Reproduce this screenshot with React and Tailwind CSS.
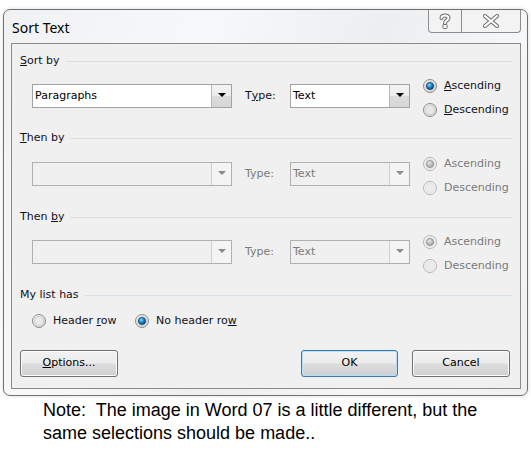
import React from 'react';

// Windows 7 style "Sort Text" dialog with a note underneath

function Radio({ checked = false, disabled = false }) {
  const ring = disabled ? '#b5b5b5' : '#8a8a8a';
  return (
    <svg width="14" height="14" viewBox="0 0 14 14" className="shrink-0">
      <defs>
        <linearGradient id="rfill" x1="0" y1="0" x2="1" y2="1">
          <stop offset="0" stopColor="#f6f6f6" />
          <stop offset="1" stopColor="#d4d4d4" />
        </linearGradient>
        <radialGradient id="rblue" cx="0.4" cy="0.35" r="0.7">
          <stop offset="0" stopColor="#8ad8ff" />
          <stop offset="0.45" stopColor="#1e8fd0" />
          <stop offset="1" stopColor="#0b3f73" />
        </radialGradient>
        <radialGradient id="rgray" cx="0.4" cy="0.35" r="0.7">
          <stop offset="0" stopColor="#e8e8e8" />
          <stop offset="1" stopColor="#9a9a9a" />
        </radialGradient>
      </defs>
      <circle cx="7" cy="7" r="6.5" fill={disabled ? '#f3f3f3' : 'url(#rfill)'} stroke={ring} />
      <circle cx="7" cy="7" r="4.5" fill={disabled ? '#ececec' : '#e9e9e9'} stroke={disabled ? '#dddddd' : '#c8c8c8'} strokeWidth="0.8" />
      {checked && (
        <circle cx="7" cy="7" r="3.6" fill={disabled ? 'url(#rgray)' : 'url(#rblue)'} stroke={disabled ? '#8c8c8c' : '#0d3a63'} strokeWidth="0.7" />
      )}
    </svg>
  );
}

function Combo({ value = '', width, disabled = false }) {
  return (
    <div
      className={`flex h-[24px] border ${width} ${disabled ? 'border-[#b0b0b0] bg-[#f0f0f0]' : 'border-[#a3a3a3] bg-white'}`}
    >
      <div className={`flex-1 flex items-center pl-[2px] ${disabled ? 'text-[#7a7a7a]' : 'text-black'}`}>{value}</div>
      <div
        className={`w-[20px] flex items-start justify-center pt-[8px] border-l ${
          disabled
            ? 'border-[#d0d0d0] bg-[#f4f4f4]'
            : 'border-[#b8b8b8] bg-[linear-gradient(#f4f4f4_0%,#ebebeb_50%,#dcdcdc_51%,#d6d6d6_100%)]'
        }`}
      >
        <svg width="8" height="4" viewBox="0 0 8 4">
          <path d="M0 0 H8 L4 4 Z" fill={disabled ? '#8a8a8a' : '#000'} />
        </svg>
      </div>
    </div>
  );
}

function GroupHeader({ children, className = '' }) {
  return (
    <div className={`flex items-center h-[16px] ${className}`}>
      <span className="text-[#101020]">{children}</span>
      <div className="flex-1 h-px bg-[#d5dfe5] ml-[6px]" />
    </div>
  );
}

function SortRow({ value, disabled, typeLabel, className = '' }) {
  const muted = disabled ? 'text-[#7a7a7a]' : 'text-[#101020]';
  return (
    <div className={`flex h-[48px] pl-[12px] ${className}`}>
      <div className="mt-[10px]">
        <Combo value={value} width="w-[200px]" disabled={disabled} />
      </div>
      <div className={`mt-[10px] ml-[13px] w-[45px] h-[24px] flex items-center ${muted}`}>{typeLabel}</div>
      <div className="mt-[10px]">
        <Combo value="Text" width="w-[120px]" disabled={disabled} />
      </div>
      <div className="ml-[13px] flex flex-col">
        <div className="h-[24px] flex items-center gap-[7px]">
          <Radio checked disabled={disabled} />
          <span className={muted}>
            {disabled ? 'Ascending' : <><span className="underline">A</span>scending</>}
          </span>
        </div>
        <div className="h-[24px] flex items-center gap-[7px]">
          <Radio disabled={disabled} />
          <span className={muted}>
            {disabled ? 'Descending' : <><span className="underline">D</span>escending</>}
          </span>
        </div>
      </div>
    </div>
  );
}

function DlgButton({ children, width, isDefault = false }) {
  return (
    <div
      className={`h-[27px] ${width} rounded-[3px] border flex items-center justify-center text-black ${
        isDefault ? 'border-[#3d7bad] shadow-[inset_0_0_0_1px_#b7e0f6]' : 'border-[#707070] shadow-[inset_0_0_0_1px_#fbfbfb]'
      } bg-[linear-gradient(#f2f2f2_0%,#ebebeb_48%,#dddddd_52%,#cfcfcf_100%)]`}
    >
      {children}
    </div>
  );
}

export default function App() {
  return (
    <div className="w-[531px] h-[450px] bg-white overflow-hidden font-['DejaVu_Sans',sans-serif] text-[11px]">
      <div className="pt-[9px] pl-[3px]">
        {/* window frame */}
        <div className="w-[525px] h-[387px] rounded-[7px] border border-[#707070] bg-[linear-gradient(115deg,#f0f1f2_0%,#f7f8f9_30%,#eceeef_55%,#f5f6f7_75%,#eef0f1_100%)] shadow-[0_0_4px_rgba(0,0,0,0.15)] flex flex-col">
          {/* title bar */}
          <div className="h-[33px] flex items-start justify-between">
            <span className="mt-[7px] ml-[8px] font-['Noto_Sans',sans-serif] text-[14px] text-black">Sort Text</span>
            <div className="flex mr-[6px]">
              <div className="w-[34px] h-[23px] border border-t-0 border-[#8d8d8d] rounded-bl-[4px] bg-[#f3f3f3] flex items-center justify-center">
                <svg width="12" height="16" viewBox="0 0 12 16">
                  <path
                    d="M2.5 5 C2.5 1.5 9.5 1.5 9.5 5 C9.5 7.5 6 7.5 6 10"
                    fill="none"
                    stroke="#6a6a6a"
                    strokeWidth="4"
                    strokeLinecap="round"
                  />
                  <path
                    d="M2.5 5 C2.5 1.5 9.5 1.5 9.5 5 C9.5 7.5 6 7.5 6 10"
                    fill="none"
                    stroke="#ffffff"
                    strokeWidth="2"
                    strokeLinecap="round"
                  />
                  <rect x="4" y="11.5" width="4" height="4" rx="0.8" fill="#ffffff" stroke="#6a6a6a" />
                </svg>
              </div>
              <div className="w-[59px] h-[23px] border border-t-0 border-l-0 border-[#8d8d8d] rounded-br-[4px] bg-[#f3f3f3] flex items-center justify-center">
                <svg width="16" height="14" viewBox="0 0 16 14">
                  <path d="M2 2 L14 12 M14 2 L2 12" stroke="#6a6a6a" strokeWidth="4" strokeLinecap="square" />
                  <path d="M2 2 L14 12 M14 2 L2 12" stroke="#ffffff" strokeWidth="2" strokeLinecap="square" />
                </svg>
              </div>
            </div>
          </div>

          {/* client area */}
          <div className="ml-[7px] mr-[6px] h-[346px] border border-[#8a8a8a] bg-[#f0f0f0] pt-[9px] pl-[8px] pr-[8px]">
            <GroupHeader>
              <span className="underline">S</span>ort by
            </GroupHeader>
            <SortRow
              className="mt-[5px]"
              value="Paragraphs"
              typeLabel={<>T<span className="underline">y</span>pe:</>}
            />

            <GroupHeader className="mt-[8px]">
              <span className="underline">T</span>hen by
            </GroupHeader>
            <SortRow className="mt-[6px]" disabled typeLabel="Type:" />

            <GroupHeader className="mt-[9px]">
              Then <span className="underline">b</span>y
            </GroupHeader>
            <SortRow className="mt-[5px]" disabled typeLabel="Type:" />

            <GroupHeader className="mt-[9px]">My list has</GroupHeader>
            <div className="mt-[8px] h-[20px] pl-[12px] flex items-center text-[#101020]">
              <Radio />
              <span className="ml-[7px] w-[82px]">
                Header <span className="underline">r</span>ow
              </span>
              <Radio checked />
              <span className="ml-[7px]">
                No header ro<span className="underline">w</span>
              </span>
            </div>

            <div className="mt-[19px] flex items-center">
              <DlgButton width="w-[98px]">
                <span>
                  <span className="underline">O</span>ptions...
                </span>
              </DlgButton>
              <div className="flex-1" />
              <DlgButton width="w-[97px]" isDefault>
                OK
              </DlgButton>
              <div className="w-[14px]" />
              <DlgButton width="w-[98px]">Cancel</DlgButton>
              <div className="w-[2px]" />
            </div>
          </div>
        </div>
      </div>

      {/* note under the screenshot */}
      <div className="pl-[43px] mt-[3px] font-['Liberation_Sans',Arial,sans-serif] text-[18px] leading-[23px] text-black">
        <p>Note:&nbsp; The image in Word 07 is a little different, but the</p>
        <p>same selections should be made..</p>
      </div>
    </div>
  );
}
